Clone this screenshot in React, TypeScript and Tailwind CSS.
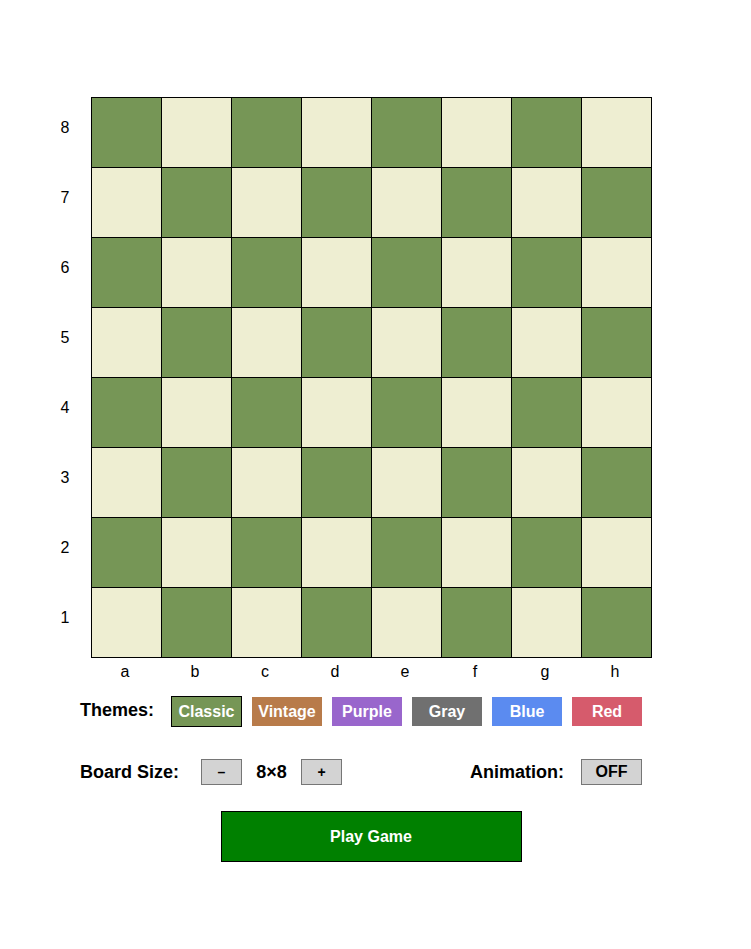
import React from "react";

const files = ["a", "b", "c", "d", "e", "f", "g", "h"];
const ranks = [8, 7, 6, 5, 4, 3, 2, 1];

const themes = [
  { name: "Classic", bg: "bg-[#769656]", selected: true },
  { name: "Vintage", bg: "bg-[#b87b4a]", selected: false },
  { name: "Purple", bg: "bg-[#9966cc]", selected: false },
  { name: "Gray", bg: "bg-[#707070]", selected: false },
  { name: "Blue", bg: "bg-[#5b8bf0]", selected: false },
  { name: "Red", bg: "bg-[#d65b6c]", selected: false },
];

export default function App() {
  return (
    <div className="min-h-screen bg-white pt-[97px] text-black font-['Liberation_Sans',Arial,sans-serif]">
      {/* Board with rank labels */}
      <div className="flex ml-[50px]">
        <div className="flex flex-col w-[30px] mr-[11px]">
          {ranks.map((r) => (
            <div key={r} className="h-[70px] pt-[22px] text-center text-[16px] leading-[18px]">
              {r}
            </div>
          ))}
        </div>
        <div>
          <div className="grid grid-cols-8 w-[561px] border-l border-t border-black">
            {ranks.map((r, ri) =>
              files.map((f, fi) => (
                <div
                  key={f + r}
                  className={`h-[70px] border-r border-b border-black ${
                    (ri + fi) % 2 === 0 ? "bg-[#769656]" : "bg-[#eeeed2]"
                  }`}
                />
              ))
            )}
          </div>
          <div className="flex w-[561px] -ml-[1px] mt-[5px]">
            {files.map((f) => (
              <div key={f} className="w-[70px] text-center text-[16px] leading-[18px]">
                {f}
              </div>
            ))}
          </div>
        </div>
      </div>

      <div className="ml-[80px] w-[582px]">
        {/* Themes */}
        <div className="flex items-start mt-[15px]">
          <div className="text-[18px] font-bold w-[91px] mt-[4px] leading-[20px]">Themes:</div>
          <div className="flex items-center gap-[10px] h-[31px]">
            {themes.map((t) =>
              t.selected ? (
                <button
                  key={t.name}
                  className={`w-[71px] h-[31px] border border-black text-white font-bold text-[16px] ${t.bg}`}
                >
                  {t.name}
                </button>
              ) : (
                <button
                  key={t.name}
                  className={`w-[70px] h-[29px] text-white font-bold text-[16px] ${t.bg}`}
                >
                  {t.name}
                </button>
              )
            )}
          </div>
        </div>

        {/* Board size / Animation */}
        <div className="flex items-start justify-between mt-[32px] w-[562px]">
          <div className="flex items-start">
            <div className="text-[18px] font-bold leading-[20px] w-[121px] mt-[3px]">Board Size:</div>
            <button className="w-[41px] h-[26px] border border-[#767676] bg-[#d3d3d3] text-[14px] font-bold">
              –
            </button>
            <div className="h-[26px] pt-[1px] flex items-center justify-center w-[59px] text-[18px] font-bold">
              8×8
            </div>
            <button className="w-[41px] h-[26px] border border-[#767676] bg-[#d3d3d3] text-[14px] font-bold">
              +
            </button>
          </div>
          <div className="flex items-start">
            <div className="text-[18px] font-bold leading-[20px] w-[111px] mt-[3px]">Animation:</div>
            <button className="w-[61px] h-[26px] border border-[#767676] bg-[#d3d3d3] text-[16px] font-bold">
              OFF
            </button>
          </div>
        </div>

        {/* Play */}
        <div className="flex justify-center mt-[26px]">
          <button className="w-[301px] h-[51px] bg-[#008000] border border-black text-white font-bold text-[16px]">
            Play Game
          </button>
        </div>
      </div>
    </div>
  );
}
